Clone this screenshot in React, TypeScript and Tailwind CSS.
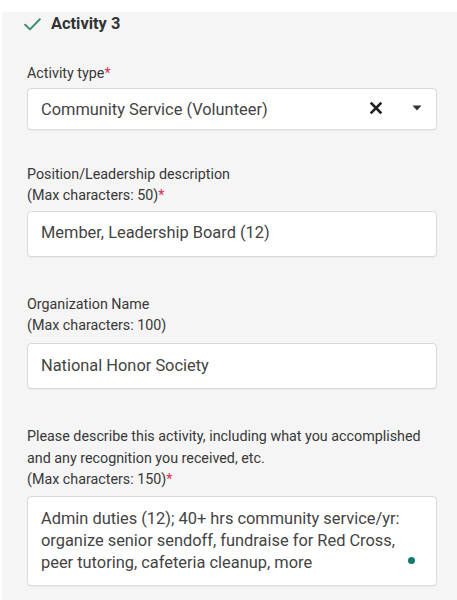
import React from 'react';

const Req = () => <span className="text-[#d9304f]">*</span>;

const Label: React.FC<{ lines: string[]; required?: boolean; className?: string }> = ({ lines, required, className }) => (
  <div className={`text-[14.3px] leading-[21.6px] text-[#383838] ${className ?? ''}`}>
    {lines.map((l, i) => (
      <div key={i}>
        {l}
        {required && i === lines.length - 1 && <Req />}
      </div>
    ))}
  </div>
);

const TextBox: React.FC<{ value: string }> = ({ value }) => (
  <div className="h-[46px] flex items-center px-[13px] bg-white border border-[#d9d9d9] rounded-[4px] shadow-[0_1px_1px_rgba(0,0,0,0.04)] text-[16.4px] text-[#444]">
    {value}
  </div>
);

export default function App() {
  return (
    <div className="w-[457px] h-[600px] bg-white pt-[3px] pl-[2px] overflow-hidden" style={{ fontFamily: 'Roboto, "Liberation Sans", sans-serif' }}>
      <div className="h-full bg-[#f5f5f5] pl-[25px] pr-[20px]">
        {/* header */}
        <div className="flex items-center h-[24px] mt-[9px] -ml-[3px]">
          <svg width="17" height="13" viewBox="0 0 17 13" fill="none" className="shrink-0">
            <path d="M1.2 6.8 L6 11.4 L15.8 1.2" stroke="#3f8c6e" strokeWidth="2" strokeLinecap="round" strokeLinejoin="round" />
          </svg>
          <span className="ml-[10px] text-[16.4px] font-bold text-[#333] leading-[24px]">Activity 3</span>
        </div>

        <Label lines={['Activity type']} required className="mt-[27px]" />
        <div className="mt-[3px] h-[42px] flex items-center pt-[4px] pl-[13px] pr-[14px] bg-white border border-[#d9d9d9] rounded-[4px] shadow-[0_1px_1px_rgba(0,0,0,0.04)]">
          <span className="flex-1 text-[16.4px] text-[#444]">Community Service (Volunteer)</span>
          <svg width="12" height="12" viewBox="0 0 12 12" className="-mt-[5px]">
            <path d="M1.5 1.5 L10.5 10.5 M10.5 1.5 L1.5 10.5" stroke="#222" strokeWidth="2.6" strokeLinecap="square" />
          </svg>
          <svg width="10" height="6" viewBox="0 0 10 6" className="ml-[30px] -mt-[6px]">
            <path d="M0.5 0.5 L9.5 0.5 L5 5.5 Z" fill="#333" />
          </svg>
        </div>

        <Label lines={['Position/Leadership description', '(Max characters: 50)']} required className="mt-[34px]" />
        <div className="mt-[4px]">
          <TextBox value="Member, Leadership Board (12)" />
        </div>

        <Label lines={['Organization Name', '(Max characters: 100)']} className="mt-[37px]" />
        <div className="mt-[6px]">
          <TextBox value="National Honor Society" />
        </div>

        <Label
          lines={['Please describe this activity, including what you accomplished', 'and any recognition you received, etc.', '(Max characters: 150)']}
          required
          className="mt-[37px]"
        />
        <div className="relative mt-[5px] h-[90px] pt-[11px] px-[13px] bg-white border border-[#d9d9d9] rounded-[4px] shadow-[0_1px_1px_rgba(0,0,0,0.04)] text-[16.4px] leading-[22.2px] text-[#444]">
          <div>Admin duties (12); 40+ hrs community service/yr:</div>
          <div>organize senior sendoff, fundraise for Red Cross,</div>
          <div>peer tutoring, cafeteria cleanup, more</div>
          <span className="absolute right-[21px] bottom-[21px] w-[7px] h-[7px] rounded-full bg-[#0f7b68]" />
        </div>
      </div>
    </div>
  );
}
